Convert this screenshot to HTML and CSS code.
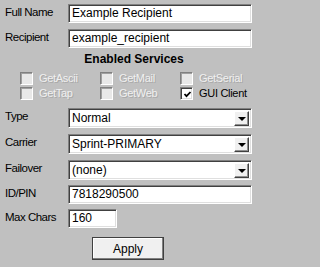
FILE: index.html
```html
<!DOCTYPE html>
<html>
<head>
<meta charset="utf-8">
<link rel="stylesheet" href="styles.css">
</head>
<body>
<div class="form">
  <div class="row">
    <div class="label">Full Name</div>
    <div class="field text">Example Recipient</div>
  </div>
  <div class="row gap">
    <div class="label">Recipient</div>
    <div class="field text">example_recipient</div>
  </div>
  <div class="header">Enabled Services</div>
  <div class="checks">
    <div class="check disabled"><span class="box"></span><span class="clabel">GetAscii</span></div>
    <div class="check disabled"><span class="box"></span><span class="clabel">GetMail</span></div>
    <div class="check disabled"><span class="box"></span><span class="clabel">GetSerial</span></div>
    <div class="check disabled"><span class="box"></span><span class="clabel">GetTap</span></div>
    <div class="check disabled"><span class="box"></span><span class="clabel">GetWeb</span></div>
    <div class="check"><span class="box on"><svg width="9" height="9" viewBox="0 0 9 9"><polyline points="1.5,4 3.5,6.2 7.5,2" fill="none" stroke="#000" stroke-width="1.8"/></svg></span><span class="clabel">GUI Client</span></div>
  </div>
  <div class="row sel first">
    <div class="label">Type</div>
    <div class="field select"><span class="value">Normal</span><span class="arrow"><span class="tri"></span></span></div>
  </div>
  <div class="row sel">
    <div class="label">Carrier</div>
    <div class="field select"><span class="value">Sprint-PRIMARY</span><span class="arrow"><span class="tri"></span></span></div>
  </div>
  <div class="row sel">
    <div class="label">Failover</div>
    <div class="field select"><span class="value">(none)</span><span class="arrow"><span class="tri"></span></span></div>
  </div>
  <div class="row gap5">
    <div class="label">ID/PIN</div>
    <div class="field text">7818290500</div>
  </div>
  <div class="row gap5">
    <div class="label">Max Chars</div>
    <div class="field text short">160</div>
  </div>
  <div class="actions">
    <button class="apply">Apply</button>
  </div>
</div>
</body>
</html>
```
FILE: styles.css
```css
html, body {
  margin: 0;
  background: #c0c0c0;
  font-family: "Liberation Sans", Arial, sans-serif;
  color: #000;
}
.form {
  box-sizing: border-box;
  width: 258px;
  display: flex;
  flex-direction: column;
  padding: 4px 6px 0 5px;
}
.row {
  display: flex;
  align-items: flex-start;
  height: 19px;
}
.row.gap { margin-top: 6px; }
.row.gap5 { margin-top: 5px; }
.row.sel { height: 20px; margin-top: 6px; }
.label {
  width: 63px;
  font-size: 11.5px;
  line-height: 13px;
  letter-spacing: -0.5px;
  padding-top: 2px;
}
.field {
  box-sizing: border-box;
  width: 184px;
  height: 100%;
  background: #fff;
  border: 1px solid;
  border-color: #808080 #fff #fff #808080;
  box-shadow: inset 1px 1px 0 #404040, inset -1px -1px 0 #dfdfdf;
  font-size: 12px;
  line-height: 17px;
  padding-left: 3px;
  white-space: nowrap;
  overflow: hidden;
}
.field.short { width: 49px; }
.select {
  display: flex;
  align-items: center;
  padding: 2px 2px 2px 3px;
}
.select .value { flex: 1; line-height: 14px; }
.arrow {
  box-sizing: border-box;
  width: 15px;
  height: 15px;
  background: #f0f0f0;
  border: 1px solid;
  border-color: #fff #404040 #404040 #fff;
  box-shadow: inset -1px -1px 0 #909090;
  display: flex;
  align-items: center;
  justify-content: center;
}
.tri {
  width: 0;
  height: 0;
  border-left: 4px solid transparent;
  border-right: 4px solid transparent;
  border-top: 4px solid #000;
  margin-top: 1px;
}
.header {
  margin-top: 4px;
  height: 14px;
  line-height: 14px;
  font-size: 12px;
  font-weight: bold;
  text-align: center;
  padding-left: 11px;
}
.checks {
  margin-top: 6px;
  padding-left: 15px;
  display: grid;
  grid-template-columns: 80px 80px 80px;
  grid-auto-rows: 15px;
}
.check {
  display: flex;
  align-items: flex-start;
  gap: 6px;
  font-size: 11px;
  letter-spacing: -0.3px;
  line-height: 13px;
}
.box {
  box-sizing: border-box;
  width: 13px;
  height: 13px;
  flex: none;
  background: #e8e8e8;
  border: 1px solid;
  border-color: #808080 #fff #fff #808080;
  box-shadow: inset 1px 1px 0 #a0a0a0;
  display: flex;
  align-items: center;
  justify-content: center;
}
.box.on {
  background: #fff;
  box-shadow: inset 1px 1px 0 #404040, inset -1px -1px 0 #dfdfdf;
}
.box svg { display: block; margin: 1px 0 0 1px; }
.check.disabled .clabel {
  color: #f0f0f0;
  text-shadow: 1px 1px 0 #a8a8a8;
}
.actions {
  margin-top: 9px;
  padding-left: 87px;
}
.apply {
  display: block;
  box-sizing: border-box;
  width: 72px;
  height: 23px;
  margin: 0;
  padding: 0;
  background: #f0f0f0;
  border: 1px solid #404040;
  box-shadow: inset -1px -1px 0 #808080, inset 1px 1px 0 #fff;
  font-family: "Liberation Sans", Arial, sans-serif;
  font-size: 12px;
  color: #000;
}
```
